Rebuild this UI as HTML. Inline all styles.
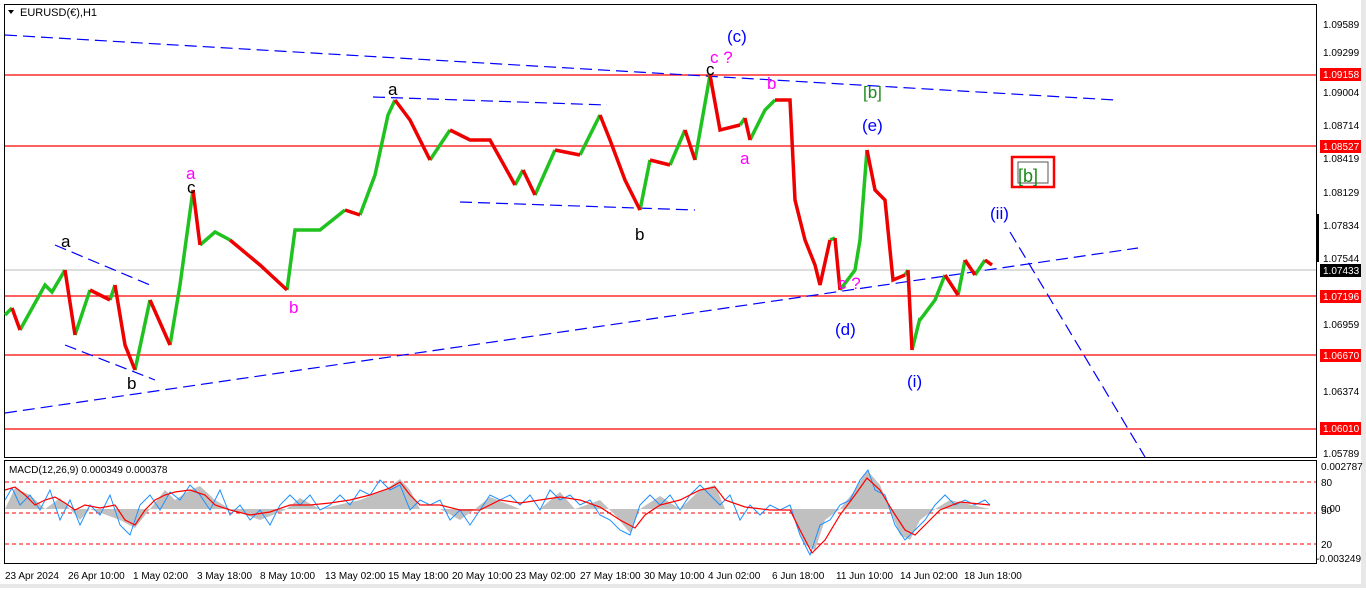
<!DOCTYPE html>
<html><head><style>
body{margin:0;width:1366px;height:588px;background:#fff;overflow:hidden;font-family:"Liberation Sans",sans-serif}
svg text{font-family:"Liberation Sans",sans-serif}
</style></head><body>
<svg width="1366" height="588" viewBox="0 0 1366 588" xmlns="http://www.w3.org/2000/svg">
<rect x="0" y="0" width="1366" height="588" fill="#fff"/>
<rect x="1361" y="0" width="5" height="588" fill="#e8e8e8"/>
<rect x="0" y="584" width="1366" height="4" fill="#e8e8e8"/>
<rect x="4.5" y="4.5" width="1312" height="453" fill="none" stroke="#000"/>
<rect x="4.5" y="460.5" width="1312" height="103" fill="none" stroke="#000"/>
<line x1="5" y1="75" x2="1316" y2="75" stroke="#f00" stroke-width="1.2"/>
<line x1="5" y1="146" x2="1316" y2="146" stroke="#f00" stroke-width="1.2"/>
<line x1="5" y1="270" x2="1316" y2="270" stroke="#bbb"/>
<line x1="5" y1="296" x2="1316" y2="296" stroke="#f00" stroke-width="1.2"/>
<line x1="5" y1="355" x2="1316" y2="355" stroke="#f00" stroke-width="1.2"/>
<line x1="5" y1="429" x2="1316" y2="429" stroke="#f00" stroke-width="1.2"/>
<g stroke="#00f" stroke-width="1.2" stroke-dasharray="12,6" fill="none">
<line x1="5" y1="35" x2="1115" y2="100"/>
<line x1="5" y1="413" x2="1138" y2="248"/>
<line x1="1010" y1="232" x2="1145" y2="457"/>
<line x1="55" y1="245" x2="150" y2="285"/>
<line x1="65" y1="345" x2="155" y2="380"/>
<line x1="373" y1="97" x2="607" y2="105"/>
<line x1="460" y1="202" x2="695" y2="210"/>
</g>
<g fill="none" stroke-width="3.5">
<path stroke="#1fc21f" d="M5,315 L12,308 M20,330 L45,285 L52,292 L65,270 M75,335 L90,290 M110,300 L115,285 M135,370 L150,300 M170,345 L180,285 L193,190 M200,245 L215,232 L230,240 M287,290 L295,230 L320,230 L345,210 M360,215 L375,175 L388,115 L395,100 M430,160 L450,130 M515,185 L523,170 M535,195 L555,150 M580,155 L600,115 M640,210 L650,160 M670,165 L685,130 M695,160 L710,75 M740,125 L745,118 M750,140 L765,110 L775,100 M830,240 L835,238 M840,290 L855,270 L860,240 L867,150 M905,275 L908,270 M912,350 L920,318 M920,320 L935,300 L945,275 M958,295 L965,260 M975,275 L985,260"/>
<path stroke="#e00" d="M12,308 L20,330 M65,270 L75,335 M90,290 L110,300 M115,285 L125,345 L135,370 M150,300 L170,345 M193,190 L200,245 M230,240 L260,265 L287,290 M345,210 L360,215 M395,100 L410,120 L430,160 M450,130 L470,140 L490,140 L515,185 M523,170 L535,195 M555,150 L580,155 M600,115 L610,140 L625,180 L640,210 M650,160 L670,165 M685,130 L695,160 M710,75 L720,130 L740,125 M745,118 L750,140 M775,100 L790,100 L795,200 L805,240 L815,265 L820,285 L830,240 M835,238 L840,290 M867,150 L875,190 L885,200 L893,280 L905,275 M908,270 L912,350 M945,275 L958,295 M965,260 L975,275 M985,260 L992,265"/>
</g>
<g font-size="17">
<text x="61" y="247" fill="#000">a</text>
<text x="127" y="389" fill="#000">b</text>
<text x="186" y="179" fill="#f0f">a</text>
<text x="187" y="193" fill="#000">c</text>
<text x="289" y="313" fill="#f0f">b</text>
<text x="388" y="95" fill="#000">a</text>
<text x="635" y="240" fill="#000">b</text>
<text x="710" y="63" fill="#f0f">c ?</text>
<text x="706" y="75" fill="#000">c</text>
<text x="727" y="42" fill="#00f">(c)</text>
<text x="767" y="89" fill="#f0f">b</text>
<text x="740" y="164" fill="#f0f">a</text>
<text x="862" y="131" fill="#00f">(e)</text>
<text x="838" y="289" fill="#f0f">c ?</text>
<text x="835" y="335" fill="#00f">(d)</text>
<text x="907" y="387" fill="#00f">(i)</text>
<text x="990" y="219" fill="#00f">(ii)</text>
<text x="863" y="98" fill="#1a8a1a">[b]</text>
</g>
<rect x="1012" y="157" width="42" height="30" fill="none" stroke="#f00" stroke-width="2.5"/>
<rect x="1018" y="162" width="30" height="21" fill="none" stroke="#555"/>
<text x="1018" y="182" font-size="18" fill="#1a8a1a">[b]</text>
<path d="M8,10 L14,10 L11,14 Z" fill="#000"/>
<text x="20" y="16" font-size="11" fill="#000">EURUSD(€),H1</text>
<g font-size="10" fill="#000">
<text x="1323" y="28">1.09589</text>
<text x="1323" y="56">1.09299</text>
<text x="1323" y="96">1.09004</text>
<text x="1323" y="129">1.08714</text>
<text x="1323" y="162">1.08419</text>
<text x="1323" y="196">1.08129</text>
<text x="1323" y="229">1.07834</text>
<text x="1323" y="262">1.07544</text>
<text x="1323" y="328">1.06959</text>
<text x="1323" y="395">1.06374</text>
<text x="1323" y="457">1.05789</text>
</g>
<g font-size="10" fill="#fff">
<rect x="1320" y="68" width="41" height="13" fill="#f00"/><text x="1323" y="78">1.09158</text>
<rect x="1320" y="140" width="41" height="13" fill="#f00"/><text x="1323" y="150">1.08527</text>
<rect x="1320" y="264" width="41" height="13" fill="#000"/><text x="1323" y="274">1.07433</text>
<rect x="1320" y="290" width="41" height="13" fill="#f00"/><text x="1323" y="300">1.07196</text>
<rect x="1320" y="349" width="41" height="13" fill="#f00"/><text x="1323" y="359">1.06670</text>
<rect x="1320" y="422" width="41" height="13" fill="#f00"/><text x="1323" y="432">1.06010</text>
</g>
<rect x="1316" y="214" width="3" height="48" fill="#000"/>
<text x="9" y="473" font-size="10" fill="#000">MACD(12,26,9) 0.000349 0.000378</text>
<g stroke="#f00" stroke-dasharray="4,3">
<line x1="5" y1="482" x2="1316" y2="482"/>
<line x1="5" y1="513" x2="1316" y2="513"/>
<line x1="5" y1="544" x2="1316" y2="544"/>
</g>
<path fill="#c0c0c0" d="M5,509 L15,488 L30,495 L45,509 L60,498 L70,509 L80,520 L90,509 L120,520 L135,528 L150,509 L165,490 L175,500 L190,490 L200,486 L215,500 L230,509 L260,520 L285,510 L300,498 L320,509 L360,500 L385,490 L400,479 L410,490 L420,509 L440,509 L460,520 L475,509 L490,497 L520,509 L540,509 L560,492 L575,509 L600,500 L615,515 L630,533 L640,509 L660,496 L680,509 L700,490 L715,485 L725,509 L760,509 L790,509 L805,545 L815,550 L825,520 L840,509 L855,490 L867,470 L880,485 L890,509 L900,535 L910,540 L920,520 L935,509 L950,500 L990,509 Z"/>
<polyline fill="none" stroke="#1e90ff" stroke-width="1" points="5,500 12,488 20,505 30,495 40,510 50,490 60,520 70,500 80,525 90,505 100,515 110,495 120,525 130,535 140,505 150,495 160,510 170,492 180,500 190,485 200,495 210,510 220,490 230,515 240,505 250,520 260,510 270,525 280,505 290,495 300,505 310,495 320,510 330,505 340,495 350,505 360,490 370,495 380,480 390,490 400,485 410,510 420,500 430,505 440,500 450,520 460,510 470,525 480,510 490,495 500,500 510,495 520,505 530,495 540,510 550,490 560,500 570,495 580,505 590,500 600,515 610,520 620,530 630,535 640,505 650,495 660,505 670,495 680,510 690,495 700,485 710,495 720,505 730,495 740,520 750,505 760,515 770,505 780,510 790,505 800,535 810,555 820,525 830,520 840,505 850,500 860,480 868,470 875,490 885,495 895,525 905,540 915,530 925,520 935,505 945,495 955,505 965,500 975,505 985,500 990,505"/>
<polyline fill="none" stroke="#f00" stroke-width="1.2" points="5,490 15,487 25,495 35,505 45,500 55,497 65,503 75,510 85,505 100,508 115,505 125,520 135,525 145,510 155,500 165,495 175,492 190,490 205,495 215,505 230,510 250,515 270,512 290,505 310,505 330,503 350,500 370,495 390,488 400,482 410,495 420,505 440,505 460,510 480,510 500,500 520,503 540,500 560,497 580,500 600,507 620,520 635,528 645,515 660,505 680,500 700,490 715,487 725,500 745,507 770,510 790,510 800,530 812,553 825,540 840,515 855,495 867,478 880,490 892,510 905,530 915,535 925,525 940,510 960,502 990,505"/>
<g font-size="10" fill="#000">
<text x="1321" y="470">0.002787</text>
<text x="1321" y="486">80</text>
<text x="1321" y="514">50</text>
<text x="1321" y="512">0.00</text>
<text x="1321" y="548">20</text>
<text x="1316" y="562">-0.003249</text>
</g>
<g font-size="10" fill="#000">
<text x="5" y="579">23 Apr 2024</text>
<text x="68" y="579">26 Apr 10:00</text>
<text x="133" y="579">1 May 02:00</text>
<text x="197" y="579">3 May 18:00</text>
<text x="260" y="579">8 May 10:00</text>
<text x="325" y="579">13 May 02:00</text>
<text x="388" y="579">15 May 18:00</text>
<text x="452" y="579">20 May 10:00</text>
<text x="515" y="579">23 May 02:00</text>
<text x="580" y="579">27 May 18:00</text>
<text x="644" y="579">30 May 10:00</text>
<text x="708" y="579">4 Jun 02:00</text>
<text x="772" y="579">6 Jun 18:00</text>
<text x="836" y="579">11 Jun 10:00</text>
<text x="900" y="579">14 Jun 02:00</text>
<text x="964" y="579">18 Jun 18:00</text>
</g>
</svg>
</body></html>
